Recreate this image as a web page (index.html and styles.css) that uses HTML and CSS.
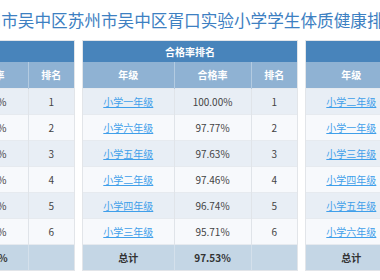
FILE: index.html
```html
<!DOCTYPE html>
<html lang="zh-CN">
<head>
<meta charset="utf-8">
<link rel="stylesheet" href="styles.css">
</head>
<body>
<div class="page">
  <h1 class="title">苏州市吴中区苏州市吴中区胥口实验小学学生体质健康排名</h1>
  <div class="panels">
    <div class="panel">
      <table class="rank">
        <colgroup><col class="c1"><col class="c2"><col class="c3"></colgroup>
        <thead>
          <tr class="cap"><th colspan="3">优良率排名</th></tr>
          <tr class="head"><th>年级</th><th>优良率</th><th>排名</th></tr>
        </thead>
        <tbody>
          <tr><td><a href="#">小学一年级</a></td><td>68.42%</td><td>1</td></tr>
          <tr><td><a href="#">小学二年级</a></td><td>61.35%</td><td>2</td></tr>
          <tr><td><a href="#">小学三年级</a></td><td>57.18%</td><td>3</td></tr>
          <tr><td><a href="#">小学六年级</a></td><td>52.64%</td><td>4</td></tr>
          <tr><td><a href="#">小学五年级</a></td><td>49.27%</td><td>5</td></tr>
          <tr><td><a href="#">小学四年级</a></td><td>45.83%</td><td>6</td></tr>
          <tr class="total"><td>总计</td><td>55.79%</td><td></td></tr>
        </tbody>
      </table>
    </div>
    <div class="panel">
      <table class="rank">
        <colgroup><col class="c1"><col class="c2"><col class="c3"></colgroup>
        <thead>
          <tr class="cap"><th colspan="3">合格率排名</th></tr>
          <tr class="head"><th>年级</th><th>合格率</th><th>排名</th></tr>
        </thead>
        <tbody>
          <tr><td><a href="#">小学一年级</a></td><td>100.00%</td><td>1</td></tr>
          <tr><td><a href="#">小学六年级</a></td><td>97.77%</td><td>2</td></tr>
          <tr><td><a href="#">小学五年级</a></td><td>97.63%</td><td>3</td></tr>
          <tr><td><a href="#">小学二年级</a></td><td>97.46%</td><td>4</td></tr>
          <tr><td><a href="#">小学四年级</a></td><td>96.74%</td><td>5</td></tr>
          <tr><td><a href="#">小学三年级</a></td><td>95.71%</td><td>6</td></tr>
          <tr class="total"><td>总计</td><td>97.53%</td><td></td></tr>
        </tbody>
      </table>
    </div>
    <div class="panel">
      <table class="rank">
        <colgroup><col class="c1"><col class="c2"><col class="c3"></colgroup>
        <thead>
          <tr class="cap"><th colspan="3">优秀率排名</th></tr>
          <tr class="head"><th>年级</th><th>优秀率</th><th>排名</th></tr>
        </thead>
        <tbody>
          <tr><td><a href="#">小学二年级</a></td><td>12.50%</td><td>1</td></tr>
          <tr><td><a href="#">小学一年级</a></td><td>11.84%</td><td>2</td></tr>
          <tr><td><a href="#">小学三年级</a></td><td>10.27%</td><td>3</td></tr>
          <tr><td><a href="#">小学四年级</a></td><td>9.63%</td><td>4</td></tr>
          <tr><td><a href="#">小学五年级</a></td><td>8.91%</td><td>5</td></tr>
          <tr><td><a href="#">小学六年级</a></td><td>7.42%</td><td>6</td></tr>
          <tr class="total"><td>总计</td><td>10.12%</td><td></td></tr>
        </tbody>
      </table>
    </div>
  </div>
</div>
</body>
</html>
```
FILE: styles.css
```css
html, body {
  margin: 0;
  padding: 0;
  background: #ffffff;
  overflow: hidden;
}
.page {
  width: 380px;
  height: 280px;
  overflow: hidden;
  font-family: "Noto Sans CJK SC", "Noto Sans", sans-serif;
  font-size: 10px;
  color: #444444;
}
.title {
  margin: 0;
  height: 40px;
  line-height: 40px;
  font-size: 16.64px;
  font-weight: normal;
  color: #3d80c2;
  white-space: nowrap;
  text-indent: -32px;
}
.panels {
  display: flex;
  gap: 7px;
  margin-left: -141px;
  width: 700px;
}
.panel {
  flex: 0 0 216px;
  box-sizing: border-box;
  border: 1px solid #e2e5e9;
  background: #ffffff;
}
.rank {
  width: 214px;
  border-collapse: collapse;
  table-layout: fixed;
}
.c1 { width: 91px; }
.c2 { width: 77px; }
.c3 { width: 46px; }
.rank th, .rank td {
  padding: 0;
  text-align: center;
  box-sizing: border-box;
}
.cap th {
  height: 21px;
  background: #4884bb;
  color: #ffffff;
  font-weight: bold;
  font-size: 10px;
}
.head th {
  height: 26px;
  background: #8fb2d3;
  color: #ffffff;
  font-weight: bold;
  border-right: 1px solid #b3cbe1;
}
.head th:last-child { border-right: none; }
.rank td {
  height: 26px;
  border-right: 1px solid #e0e4e9;
  border-top: 1px solid #e6eaef;
}
.rank td:last-child { border-right: none; }
.rank tbody tr:nth-child(odd) td { background: #e8eef5; }
.rank tbody tr:nth-child(even) td { background: #f7f9fc; }
.rank tbody tr.total td {
  background: #c4d6e5;
  font-weight: bold;
  color: #333333;
  border-right-color: #d4e0eb;
}
.rank a {
  color: #3f9fea;
  text-decoration: underline;
}
```
